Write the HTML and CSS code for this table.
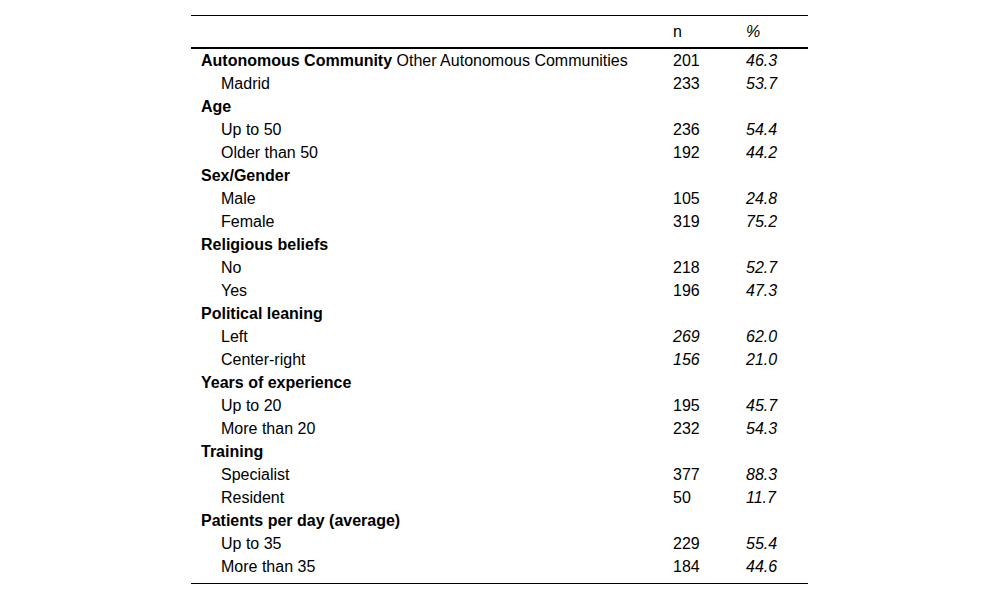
FILE: index.html
```html
<!DOCTYPE html>
<html lang="en">
<head>
<meta charset="utf-8">
<title>Sample characteristics</title>
<link rel="stylesheet" href="styles.css">
</head>
<body>
<div class="table-wrap">
<table class="data">
  <thead>
    <tr>
      <th class="label"></th>
      <th class="num">n</th>
      <th class="pct"><i>%</i></th>
    </tr>
  </thead>
  <tbody>
    <tr><td class="label cat"><b>Autonomous Community</b> Other Autonomous Communities</td><td class="num">201</td><td class="pct it">46.3</td></tr>
    <tr><td class="label sub">Madrid</td><td class="num">233</td><td class="pct it">53.7</td></tr>
    <tr><td class="label cat"><b>Age</b></td><td class="num"></td><td class="pct"></td></tr>
    <tr><td class="label sub">Up to 50</td><td class="num">236</td><td class="pct it">54.4</td></tr>
    <tr><td class="label sub">Older than 50</td><td class="num">192</td><td class="pct it">44.2</td></tr>
    <tr><td class="label cat"><b>Sex/Gender</b></td><td class="num"></td><td class="pct"></td></tr>
    <tr><td class="label sub">Male</td><td class="num">105</td><td class="pct it">24.8</td></tr>
    <tr><td class="label sub">Female</td><td class="num">319</td><td class="pct it">75.2</td></tr>
    <tr><td class="label cat"><b>Religious beliefs</b></td><td class="num"></td><td class="pct"></td></tr>
    <tr><td class="label sub">No</td><td class="num">218</td><td class="pct it">52.7</td></tr>
    <tr><td class="label sub">Yes</td><td class="num">196</td><td class="pct it">47.3</td></tr>
    <tr><td class="label cat"><b>Political leaning</b></td><td class="num"></td><td class="pct"></td></tr>
    <tr><td class="label sub">Left</td><td class="num it">269</td><td class="pct it">62.0</td></tr>
    <tr><td class="label sub">Center-right</td><td class="num it">156</td><td class="pct it">21.0</td></tr>
    <tr><td class="label cat"><b>Years of experience</b></td><td class="num"></td><td class="pct"></td></tr>
    <tr><td class="label sub">Up to 20</td><td class="num">195</td><td class="pct it">45.7</td></tr>
    <tr><td class="label sub">More than 20</td><td class="num">232</td><td class="pct it">54.3</td></tr>
    <tr><td class="label cat"><b>Training</b></td><td class="num"></td><td class="pct"></td></tr>
    <tr><td class="label sub">Specialist</td><td class="num">377</td><td class="pct it">88.3</td></tr>
    <tr><td class="label sub">Resident</td><td class="num">50</td><td class="pct it">11.7</td></tr>
    <tr><td class="label cat"><b>Patients per day (average)</b></td><td class="num"></td><td class="pct"></td></tr>
    <tr><td class="label sub">Up to 35</td><td class="num">229</td><td class="pct it">55.4</td></tr>
    <tr><td class="label sub">More than 35</td><td class="num">184</td><td class="pct it">44.6</td></tr>
  </tbody>
</table>
</div>
</body>
</html>
```
FILE: styles.css
```css
html, body {
  margin: 0;
  padding: 0;
  background: #ffffff;
}

body {
  font-family: "Liberation Sans", Arial, Helvetica, sans-serif;
  font-size: 16px;
  color: #000000;
}

.table-wrap {
  width: 617px;
  margin: 15px 0 0 191px;
  border-top: 1px solid #000000;
  border-bottom: 1px solid #000000;
  padding-bottom: 5px;
}

.data {
  width: 617px;
  border-collapse: separate;
  border-spacing: 0;
  table-layout: fixed;
}

.data th,
.data td {
  padding: 0;
  text-align: left;
  vertical-align: middle;
  white-space: nowrap;
  font-weight: normal;
}

.data thead th {
  height: 31px;
  line-height: 31px;
  border-bottom: 2px solid #000000;
}

.data tbody td {
  height: 23px;
  line-height: 23px;
}

.data .label {
  width: 472px;
}

.data .num {
  width: 63px;
  padding-left: 10px;
}

.data .pct {
  padding-left: 10px;
}

.data .cat {
  padding-left: 10px;
}

.data .sub {
  padding-left: 30px;
}

.data .it {
  font-style: italic;
}

.data b {
  font-weight: bold;
}
```
